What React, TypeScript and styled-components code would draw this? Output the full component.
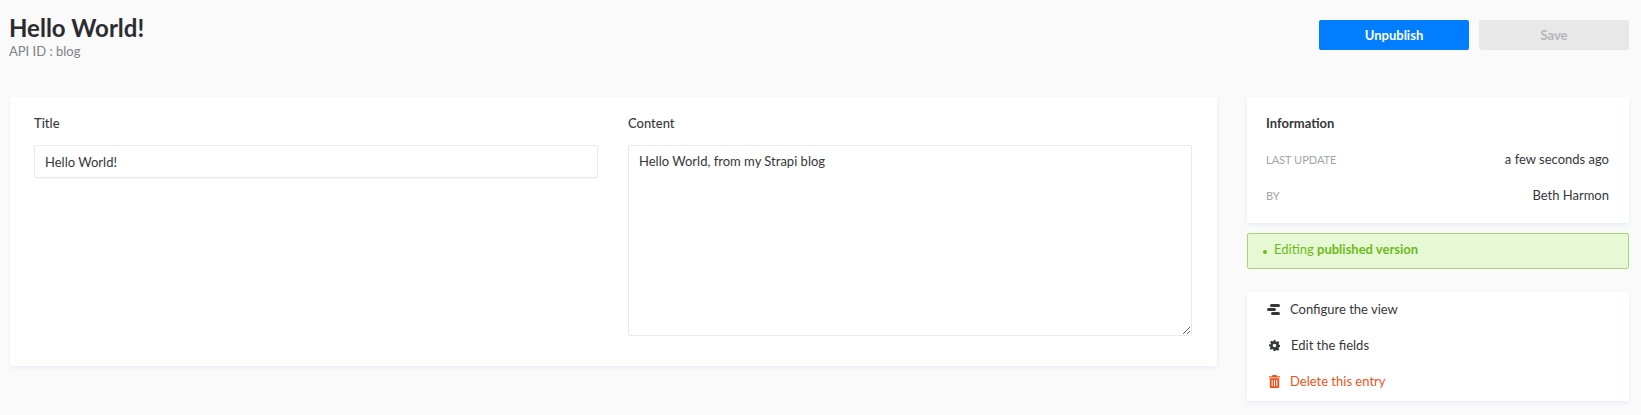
import React from "react";
import styled, { createGlobalStyle } from "styled-components";

const Global = createGlobalStyle`
  html, body { margin: 0; padding: 0; background: #fafafb; }
  body { font-family: Lato, "Open Sans", sans-serif; font-size: 13px; color: #36373b; width: 1641px; height: 415px; overflow: hidden; }
`;

const Page = styled.div`
  padding: 20px 12px 0 9px;
  display: flex;
  flex-direction: column;
`;
const Header = styled.header`
  display: flex;
  justify-content: space-between;
  align-items: flex-start;
  height: 77px;
`;
const TitleBlock = styled.div`
  margin-top: -7px;
`;
const PageTitle = styled.h1`
  margin: 0;
  font-size: 24px;
  line-height: 30px;
  font-weight: 700;
  color: #2c2c2f;
`;
const Subtitle = styled.p`
  margin: 0;
  font-size: 13px;
  line-height: 16px;
  color: #7f8186;
`;
const Actions = styled.div`
  display: flex;
  gap: 10px;
`;
const Button = styled.button<{ $primary?: boolean }>`
  width: 150px;
  height: 30px;
  border: 0;
  border-radius: 2px;
  font-family: inherit;
  font-size: 13px;
  font-weight: 700;
  color: ${(p) => (p.$primary ? "#ffffff" : "#b4b6ba")};
  background: ${(p) => (p.$primary ? "#007eff" : "#e8e8e9")};
`;
const Body = styled.div`
  display: grid;
  grid-template-columns: 1207px 382px;
  column-gap: 30px;
  align-items: start;
  margin-left: 1px;
`;
const EditCard = styled.section`
  background: #fff;
  border-radius: 2px;
  box-shadow: 0 2px 4px rgba(227, 233, 243, 0.75);
  height: 269px;
  padding: 18px 24px 0;
  display: grid;
  grid-template-columns: 564px 564px;
  column-gap: 30px;
  box-sizing: border-box;
`;
const Field = styled.div`
  display: flex;
  flex-direction: column;
`;
const Label = styled.label`
  font-size: 13px;
  font-weight: 500;
  line-height: 16px;
  color: #36373b;
  margin-bottom: 14px;
`;
const TextInput = styled.input`
  height: 33px;
  box-sizing: border-box;
  border: 1px solid #e8e9ec;
  border-radius: 2px;
  padding: 0 10px;
  font-family: inherit;
  font-size: 13px;
  color: #36373b;
  background: #fff;
  box-shadow: 0 1px 1px rgba(104, 118, 142, 0.05);
  outline: none;
`;
const TextArea = styled.textarea`
  height: 191px;
  box-sizing: border-box;
  border: 1px solid #e8e9ec;
  border-radius: 2px;
  padding: 6px 10px;
  font-family: inherit;
  font-size: 13px;
  line-height: 18px;
  color: #36373b;
  background: #fff;
  outline: none;
`;
const Side = styled.aside`
  display: flex;
  flex-direction: column;
`;
const InfoCard = styled.section`
  background: #fff;
  border-radius: 2px;
  box-shadow: 0 2px 4px rgba(227, 233, 243, 0.75);
  height: 126px;
  box-sizing: border-box;
  padding: 18px 20px 0 19px;
`;
const InfoTitle = styled.h2`
  margin: 0 0 20px;
  font-size: 13px;
  line-height: 16px;
  font-weight: 700;
  color: #36373b;
`;
const InfoRow = styled.div`
  display: flex;
  justify-content: space-between;
  align-items: center;
  height: 16px;
  margin-bottom: 20px;
`;
const InfoKey = styled.span`
  font-size: 11px;
  text-transform: uppercase;
  color: #a3a5aa;
`;
const InfoValue = styled.span`
  font-size: 13px;
  color: #36373b;
`;
const Notice = styled.div`
  margin-top: 10px;
  height: 36px;
  box-sizing: border-box;
  background: #e6f8d4;
  border: 1px solid #aad67c;
  border-radius: 2px;
  display: flex;
  align-items: center;
  padding: 0 0 4px 15px;
  gap: 7px;
  font-size: 13px;
  color: #6dbb1a;
`;
const Dot = styled.span`
  width: 4px;
  height: 4px;
  border-radius: 50%;
  background: #6dbb1a;
  margin-top: 6px;
`;
const NoticeStrong = styled.strong`
  font-weight: 700;
`;
const LinksCard = styled.nav`
  margin-top: 23px;
  background: #fff;
  border-radius: 2px;
  box-shadow: 0 2px 4px rgba(227, 233, 243, 0.75);
  height: 109px;
  box-sizing: border-box;
  padding: 0 0 0 20px;
  display: flex;
  flex-direction: column;
`;
const LinkRow = styled.a<{ $danger?: boolean; $gap: number }>`
  height: 36px;
  box-sizing: border-box;
  padding-bottom: 2px;
  display: flex;
  align-items: center;
  gap: ${(p) => p.$gap}px;
  font-size: 13px;
  color: ${(p) => (p.$danger ? "#f1521a" : "#36373b")};
`;
const IconSlot = styled.svg<{ $inset?: number }>`
  flex: none;
  display: block;
  margin-left: ${(p) => p.$inset ?? 0}px;
`;

const ConfigureIcon = () => (
  <IconSlot width="13" height="11" viewBox="0 0 13 11" fill="#36373b">
    <rect x="3" y="0" width="10" height="3" rx="1.5" />
    <rect x="0" y="4" width="9" height="3" rx="1.5" />
    <rect x="4" y="8" width="9" height="3" rx="1.5" />
  </IconSlot>
);
const GearIcon = () => (
  <IconSlot $inset={2} width="11" height="11" viewBox="0 0 24 24" fill="#36373b">
    <path
      fillRule="evenodd"
      d="M10 0h4l.7 3.300 2.100.900L19.700 2.400l2.800 2.800-1.800 2.900.900 2.100 3.400.800v4l-3.400.700-.900 2.100 1.800 2.900-2.800 2.800-2.900-1.800-2.100.900L14 24h-4l-.7-3.400-2.100-.900-2.900 1.800-2.800-2.800 1.800-2.900-.900-2.100L0 14v-4l3.400-.800.900-2.100-1.800-2.900 2.800-2.800 2.900 1.800 2.100-.900zM12 8a4 4 0 1 0 0 8 4 4 0 0 0 0-8z"
    />
  </IconSlot>
);
const TrashIcon = () => (
  <IconSlot $inset={2} width="11" height="13" viewBox="0 0 11 13" fill="#f1521a">
    <path d="M3.500 0h4l.6 1.200H11v1.300H0V1.200h2.900z" />
    <path
      fillRule="evenodd"
      d="M.8 3.300h9.400V12a1 1 0 0 1-1 1H1.800a1 1 0 0 1-1-1zM2.700 5v6.300h1V5zm2.300 0v6.300h1V5zm2.300 0v6.300h1V5z"
    />
  </IconSlot>
);

export default function App() {
  return (
    <>
      <Global />
      <Page>
        <Header>
          <TitleBlock>
            <PageTitle>Hello World!</PageTitle>
            <Subtitle>API ID : blog</Subtitle>
          </TitleBlock>
          <Actions>
            <Button $primary>Unpublish</Button>
            <Button disabled>Save</Button>
          </Actions>
        </Header>
        <Body>
          <EditCard>
            <Field>
              <Label>Title</Label>
              <TextInput defaultValue="Hello World!" />
            </Field>
            <Field>
              <Label>Content</Label>
              <TextArea defaultValue="Hello World, from my Strapi blog" />
            </Field>
          </EditCard>
          <Side>
            <InfoCard>
              <InfoTitle>Information</InfoTitle>
              <InfoRow>
                <InfoKey>Last update</InfoKey>
                <InfoValue>a few seconds ago</InfoValue>
              </InfoRow>
              <InfoRow>
                <InfoKey>By</InfoKey>
                <InfoValue>Beth Harmon</InfoValue>
              </InfoRow>
            </InfoCard>
            <Notice>
              <Dot />
              <span>
                Editing <NoticeStrong>published version</NoticeStrong>
              </span>
            </Notice>
            <LinksCard>
              <LinkRow $gap={10}>
                <ConfigureIcon />
                Configure the view
              </LinkRow>
              <LinkRow $gap={11}>
                <GearIcon />
                Edit the fields
              </LinkRow>
              <LinkRow $gap={10} $danger>
                <TrashIcon />
                Delete this entry
              </LinkRow>
            </LinksCard>
          </Side>
        </Body>
      </Page>
    </>
  );
}
